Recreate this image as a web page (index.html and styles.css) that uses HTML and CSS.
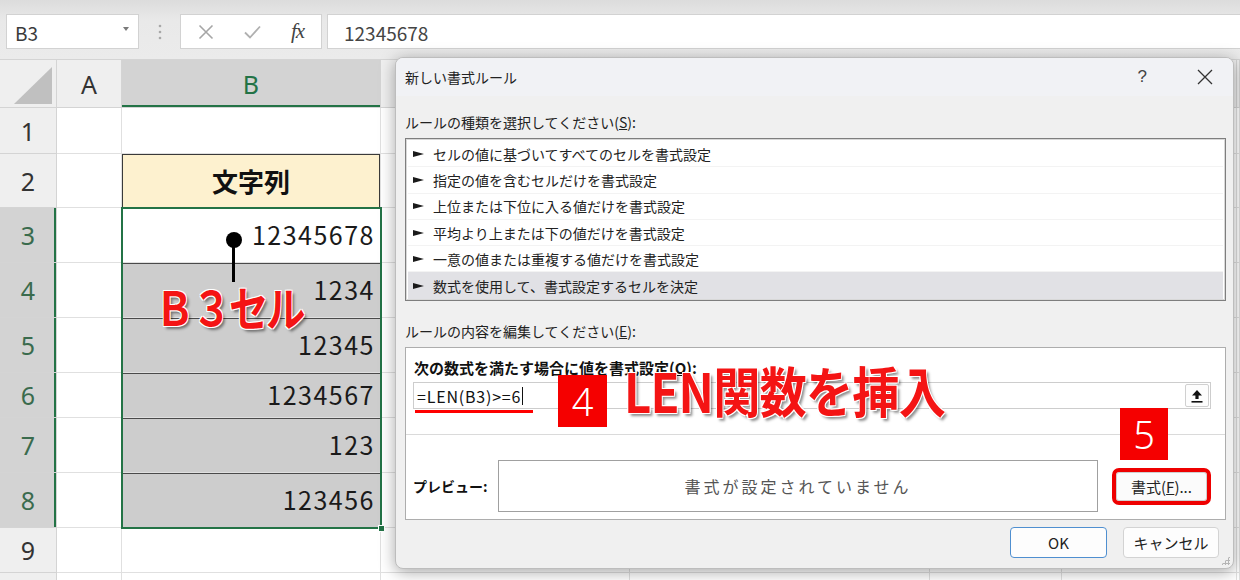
FILE: index.html
```html
<!DOCTYPE html>
<html lang="ja">
<head>
  <meta charset="UTF-8">
  <title>新しい書式ルール</title>
  <link rel="stylesheet" href="styles.css">
</head>
<body>
  <div class="formula-bar">
    <div class="name-box"><span>B3</span><span class="caret"></span></div>
    <div class="grip">
      <svg width="4" height="16" viewBox="0 0 4 16"><circle cx="2" cy="2" r="1.3" fill="#a8a8a8"/><circle cx="2" cy="8" r="1.3" fill="#a8a8a8"/><circle cx="2" cy="14" r="1.3" fill="#a8a8a8"/></svg>
    </div>
    <div class="fx-box">
      <svg class="fx-icon" width="16" height="16" viewBox="0 0 16 16"><path d="M1.5 1.5 L14.5 14.5 M14.5 1.5 L1.5 14.5" stroke="#a6a6a6" stroke-width="1.6" fill="none"/></svg>
      <svg class="fx-icon" width="17" height="14" viewBox="0 0 17 14"><path d="M1 7.5 L6 12.5 L16 1.5" stroke="#b0b0b0" stroke-width="1.8" fill="none"/></svg>
      <span class="fx">fx</span>
    </div>
    <div class="formula-input">12345678</div>
  </div>

  <div class="sheet" id="sheet"></div>

  <div class="selection"><span class="fill-handle"></span></div>

  <div class="dialog">
    <div class="dlg-title">
      <span>新しい書式ルール</span>
      <div class="dlg-ctrls">
        <span class="help">?</span>
        <svg width="16" height="16" viewBox="0 0 16 16"><path d="M1 1 L15 15 M15 1 L1 15" stroke="#333" stroke-width="1.3" fill="none"/></svg>
      </div>
    </div>
    <div class="dlg-body">
      <div class="dlg-label">ルールの種類を選択してください(<u>S</u>):</div>
      <ul class="rule-list">
        <li>セルの値に基づいてすべてのセルを書式設定</li>
        <li>指定の値を含むセルだけを書式設定</li>
        <li>上位または下位に入る値だけを書式設定</li>
        <li>平均より上または下の値だけを書式設定</li>
        <li>一意の値または重複する値だけを書式設定</li>
        <li class="selected">数式を使用して、書式設定するセルを決定</li>
      </ul>
      <div class="dlg-label">ルールの内容を編集してください(<u>E</u>):</div>
      <div class="edit-box">
        <div class="edit-top">
          <div class="edit-label">次の数式を満たす場合に値を書式設定(<u>O</u>):</div>
          <div class="formula-field">
            <span class="formula-text">=LEN(B3)&gt;=6</span><span class="text-caret"></span>
            <span class="collapse-btn">
              <svg width="12" height="14" viewBox="0 0 12 14"><path d="M6 1 L11 6.5 L7.6 6.5 L7.6 10 L4.4 10 L4.4 6.5 L1 6.5 Z" fill="#111"/><rect x="0.5" y="12" width="11" height="1.6" fill="#111"/></svg>
            </span>
          </div>
        </div>
        <div class="preview-row">
          <span class="preview-label">プレビュー:</span>
          <div class="preview-box">書式が設定されていません</div>
          <span class="fmt-btn">書式(<u>F</u>)...</span>
        </div>
      </div>
      <div class="dlg-buttons">
        <span class="btn ok">OK</span>
        <span class="btn">キャンセル</span>
      </div>
    </div>
    <span class="grip-corner"></span>
  </div>

  <!-- annotations -->
  <span class="pin-dot"></span>
  <span class="pin-line"></span>
  <span class="tag tag-b3">Ｂ３セル</span>
  <span class="step step-4">4</span>
  <span class="tag tag-len">LEN関数を挿入</span>
  <span class="red-underline"></span>
  <span class="step step-5">5</span>

  <script>
    const cols = ['A', 'B', 'C', 'D', 'E', 'F', 'G'];
    const values = { 2: '文字列', 3: '12345678', 4: '1234', 5: '12345', 6: '1234567', 7: '123', 8: '123456' };

    function renderSheet() {
      const sheet = document.getElementById('sheet');
      let html = '<div class="corner"><span></span></div>';
      // only A and B are visible, the rest sit behind the dialog
      cols.forEach(c => {
        const label = c === 'A' || c === 'B' ? c : '';
        html += `<div class="col-head${c === 'B' ? ' active' : ''}">${label}</div>`;
      });
      for (let r = 1; r <= 10; r++) {
        const active = r >= 3 && r <= 8;
        html += `<div class="row-head${active ? ' active' : ''}">${r < 10 ? r : ''}</div>`;
        cols.forEach(c => {
          let cls = 'cell';
          let text = '';
          if (c === 'B' && values[r]) {
            text = values[r];
            if (r === 2) cls += ' header-cell';
            else if (r === 3) cls += ' num first';
            else cls += ' num gray';
          }
          html += `<div class="${cls}">${text}</div>`;
        });
      }
      sheet.innerHTML = html;
    }

    renderSheet();
  </script>
</body>
</html>
```

FILE: styles.css
```css
* {
  box-sizing: border-box;
}

body {
  margin: 0;
  width: 1240px;
  height: 580px;
  overflow: hidden;
  position: relative;
  background: #fff;
  font-family: "Noto Sans CJK JP", "Noto Sans", sans-serif;
  color: #1e1e1e;
}

/* formula bar */
.formula-bar {
  height: 60px;
  display: flex;
  align-items: flex-start;
  padding: 14px 0 0 6px;
  background: linear-gradient(#dcdcdc, #e9e9e9 35%, #ebebeb);
  border-bottom: 1px solid #d4d4d4;
}

.name-box {
  width: 133px;
  height: 35px;
  background: #fff;
  border: 1px solid #d2d2d2;
  display: flex;
  align-items: center;
  justify-content: space-between;
  padding: 2px 9px 0 8px;
  font-size: 19px;
  color: #3a3a3a;
}

.name-box .caret {
  border-left: 3.5px solid transparent;
  border-right: 3.5px solid transparent;
  border-top: 4px solid #7a7a7a;
  margin-top: -8px;
}

.grip {
  width: 41px;
  height: 35px;
  display: flex;
  align-items: center;
  justify-content: center;
}

.fx-box {
  width: 142px;
  height: 35px;
  background: #fff;
  border: 1px solid #d2d2d2;
  display: flex;
  align-items: center;
  padding: 0 0 0 17px;
  gap: 30px;
}

.fx {
  font-family: "Liberation Serif", serif;
  font-style: italic;
  font-size: 21px;
  color: #444;
  letter-spacing: -1px;
}

.formula-input {
  flex: 1;
  height: 35px;
  margin-left: 5px;
  background: #fff;
  border: 1px solid #d2d2d2;
  border-right: none;
  padding: 2px 0 0 16px;
  font-size: 19px;
  line-height: 31px;
  color: #444;
}

/* sheet grid */
.sheet {
  display: grid;
  grid-template-columns: 57px 65px 259px 249px 300px 132px 175px 1fr;
  grid-template-rows: 48px 46px 54px 55px 55px 55px 45px 55px 55px 45px 40px;
}

.sheet > div {
  border-right: 1px solid #e0e0e0;
  border-bottom: 1px solid #e0e0e0;
}

.corner {
  background: #efefef;
  display: flex;
  justify-content: flex-end;
  align-items: flex-end;
  padding: 0 4px 3px 0;
  border-color: #d4d4d4 !important;
}

.corner span {
  border-left: 38px solid transparent;
  border-bottom: 37px solid #c0c0c0;
}

.col-head {
  background: #efefef;
  border-color: #d4d4d4 !important;
  display: flex;
  align-items: center;
  justify-content: center;
  font-size: 25px;
  color: #333;
  font-family: "Noto Sans", sans-serif;
}

.col-head.active {
  background: #d3d3d3;
  color: #237346;
  box-shadow: inset 0 -2px 0 #237346;
}

.row-head {
  background: #efefef;
  border-color: #d4d4d4 !important;
  display: flex;
  align-items: center;
  justify-content: center;
  font-size: 25px;
  color: #333;
  font-family: "Noto Sans", sans-serif;
}

.row-head.active {
  background: #d3d3d3;
  color: #3a6b4d;
  box-shadow: inset -2px 0 0 #237346;
}

.cell {
  background: #fff;
}

.header-cell {
  background: #fdf1cf;
  box-shadow: inset 1px 1px 0 #3a3a3a, inset -1px 0 0 #3a3a3a;
  display: flex;
  align-items: center;
  justify-content: center;
  font-size: 26px;
  font-weight: bold;
  color: #111;
}

.num {
  display: flex;
  align-items: center;
  justify-content: flex-end;
  padding: 0 5px 2px 0;
  font-size: 25px;
  letter-spacing: 1.5px;
  color: #1a1a1a;
}

.num.first {
  box-shadow: inset 0 1px 0 #3a3a3a;
}

.num.gray {
  background: #cdcdcd;
  box-shadow: inset 0 1px 0 #4a4a4a;
}

.selection {
  position: absolute;
  left: 121px;
  top: 207px;
  width: 261px;
  height: 322px;
  border: 2px solid #237346;
}

.fill-handle {
  position: absolute;
  right: -5px;
  bottom: -5px;
  width: 7px;
  height: 7px;
  background: #237346;
  border: 1px solid #fff;
}

/* dialog */
.dialog {
  position: absolute;
  left: 395px;
  top: 57px;
  width: 839px;
  height: 512px;
  background: #f0f0f0;
  border: 1px solid #bdbdbd;
  border-radius: 8px;
  box-shadow: 0 3px 16px rgba(0, 0, 0, 0.35);
  display: flex;
  flex-direction: column;
  font-size: 14px;
  overflow: hidden;
}

.dlg-title {
  height: 38px;
  flex: none;
  display: flex;
  align-items: center;
  justify-content: space-between;
  padding: 0 20px 0 9px;
  background: #f1f2f5;
  color: #222;
}

.dlg-ctrls {
  display: flex;
  align-items: center;
  gap: 50px;
}

.help {
  font-size: 17px;
  font-family: "Liberation Sans", sans-serif;
  color: #444;
}

.dlg-body {
  padding: 0 7px 0 9px;
  flex: 1;
}

.dlg-label {
  line-height: 20px;
  margin-top: 16px;
  color: #222;
}

.dlg-label + .edit-box,
.dlg-label + .rule-list {
  margin-top: 6px;
}

.rule-list {
  list-style: none;
  margin: 0;
  padding: 2px 2px 0 2px;
  height: 163px;
  background: #fff;
  border: 1px solid #7e7e7e;
  box-shadow: inset 0 0 0 1px #d8d8d8;
}

.rule-list li {
  height: 26.3px;
  display: flex;
  align-items: center;
  padding-left: 5px;
  border-bottom: 1px solid #f3f3f3;
  font-size: 14px;
  color: #222;
}

.rule-list li::before {
  content: "";
  border-left: 11px solid #1a1a1a;
  border-top: 3.5px solid transparent;
  border-bottom: 3.5px solid transparent;
  margin-right: 9px;
}

.rule-list li.selected {
  background: #e1e1e5;
  border-bottom: none;
}

.rule-list + .dlg-label {
  margin-top: 20px;
}

.edit-box {
  height: 173px;
  background: #fff;
  border: 1px solid #adadad;
}

.edit-top {
  height: 87px;
  padding: 10px 14px 0 7px;
  border-bottom: 1px solid #dadada;
}

.edit-label {
  font-weight: bold;
  font-size: 15px;
  line-height: 20px;
  margin-left: 1px;
  color: #111;
}

.formula-field {
  margin-top: 4px;
  height: 27px;
  border: 1px solid #cdcdcd;
  display: flex;
  align-items: center;
  padding: 0 1px 0 3px;
}

.formula-text {
  font-size: 16px;
  letter-spacing: 0.8px;
  color: #111;
}

.text-caret {
  width: 1px;
  height: 18px;
  background: #111;
  margin-left: 1px;
}

.collapse-btn {
  margin-left: auto;
  width: 24px;
  height: 23px;
  border: 1px solid #d0d0d0;
  border-radius: 2px;
  background: #fdfdfd;
  display: flex;
  align-items: center;
  justify-content: center;
}

.preview-row {
  display: flex;
  align-items: center;
  padding: 25px 0 0 7px;
}

.preview-label {
  width: 85px;
  font-weight: bold;
  font-size: 14px;
  color: #111;
}

.preview-box {
  width: 600px;
  height: 52px;
  border: 1px solid #a0a0a0;
  display: flex;
  align-items: center;
  justify-content: center;
  font-size: 16px;
  letter-spacing: 3px;
  color: #555;
}

.fmt-btn {
  margin-left: 18px;
  width: 91px;
  height: 29px;
  background: #fbfbfb;
  border: 1px solid #cfcfcf;
  border-radius: 3px;
  outline: 4px solid #ee0000;
  display: flex;
  align-items: center;
  justify-content: center;
  font-size: 15px;
  color: #222;
}

.dlg-buttons {
  margin-top: 7px;
  display: flex;
  justify-content: flex-end;
  gap: 16px;
  padding-right: 7px;
}

.btn {
  width: 96px;
  height: 31px;
  background: #fdfdfd;
  border: 1px solid #d3d3d3;
  border-radius: 4px;
  display: flex;
  align-items: center;
  justify-content: center;
  font-size: 15px;
  color: #222;
}

.btn.ok {
  width: 97px;
  border-color: #4f8fd0;
}

.grip-corner {
  position: absolute;
  right: 3px;
  bottom: 3px;
  width: 9px;
  height: 9px;
  background: radial-gradient(circle, #b5b5b5 1px, transparent 1.2px) 0 0 / 3px 3px;
  clip-path: polygon(100% 0, 100% 100%, 0 100%);
}

/* annotations */
.pin-dot {
  position: absolute;
  left: 226px;
  top: 232px;
  width: 16px;
  height: 16px;
  border-radius: 50%;
  background: #000;
}

.pin-line {
  position: absolute;
  left: 232px;
  top: 240px;
  width: 3px;
  height: 42px;
  background: #000;
}

.tag {
  position: absolute;
  font-weight: bold;
  color: #f41414;
  line-height: 1;
  white-space: nowrap;
  transform-origin: left top;
  text-shadow: -1px -1px 0 #fff, 1px -1px 0 #fff, -1px 1px 0 #fff, 1px 1px 0 #fff, 3px 3px 3px rgba(0, 0, 0, 0.45);
}

.tag-b3 {
  left: 155px;
  top: 282px;
  font-size: 47px;
  letter-spacing: -3px;
  transform: scaleX(0.84);
}

.tag-len {
  left: 624px;
  top: 363px;
  font-size: 54px;
  letter-spacing: -1px;
  transform: scaleX(0.875);
}

.step {
  position: absolute;
  width: 49px;
  height: 52px;
  background: #f50000;
  color: #fff;
  display: flex;
  align-items: center;
  justify-content: center;
  font-size: 38px;
  font-weight: 300;
  font-family: "Noto Sans", sans-serif;
}

.step-4 {
  left: 558px;
  top: 375px;
}

.step-5 {
  left: 1120px;
  top: 408px;
  width: 48px;
}

.red-underline {
  position: absolute;
  left: 415px;
  top: 410px;
  width: 118px;
  height: 2.5px;
  background: #f00;
}
```
